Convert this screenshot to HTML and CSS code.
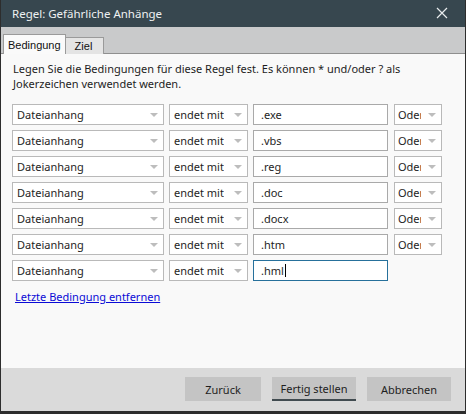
FILE: index.html
```html
<!DOCTYPE html>
<html lang="de">
<head>
  <meta charset="UTF-8" />
  <title>Regel: Gefährliche Anhänge</title>
  <link rel="stylesheet" href="styles.css">
</head>
<body>
  <div class="window">
    <div class="titlebar">
      <span class="title">Regel: Gefährliche Anhänge</span>
      <svg class="close" width="12" height="12" viewBox="0 0 12 12">
        <path d="M1 1 L11 11 M11 1 L1 11" stroke="#e8ecee" stroke-width="1.2" fill="none"/>
      </svg>
    </div>

    <div class="tabs">
      <div class="tab active">Bedingung</div>
      <div class="tab">Ziel</div>
    </div>

    <div class="content">
      <p class="intro">Legen Sie die Bedingungen für diese Regel fest. Es können * und/oder ? als Jokerzeichen verwendet werden.</p>

      <div class="rules">
        <div class="rule">
          <div class="select field"><span>Dateianhang</span><i class="arrow"></i></div>
          <div class="select op"><span>endet mit</span><i class="arrow"></i></div>
          <div class="input">.exe</div>
          <div class="select join"><span>Oder</span><i class="arrow"></i></div>
        </div>
        <div class="rule">
          <div class="select field"><span>Dateianhang</span><i class="arrow"></i></div>
          <div class="select op"><span>endet mit</span><i class="arrow"></i></div>
          <div class="input">.vbs</div>
          <div class="select join"><span>Oder</span><i class="arrow"></i></div>
        </div>
        <div class="rule">
          <div class="select field"><span>Dateianhang</span><i class="arrow"></i></div>
          <div class="select op"><span>endet mit</span><i class="arrow"></i></div>
          <div class="input">.reg</div>
          <div class="select join"><span>Oder</span><i class="arrow"></i></div>
        </div>
        <div class="rule">
          <div class="select field"><span>Dateianhang</span><i class="arrow"></i></div>
          <div class="select op"><span>endet mit</span><i class="arrow"></i></div>
          <div class="input">.doc</div>
          <div class="select join"><span>Oder</span><i class="arrow"></i></div>
        </div>
        <div class="rule">
          <div class="select field"><span>Dateianhang</span><i class="arrow"></i></div>
          <div class="select op"><span>endet mit</span><i class="arrow"></i></div>
          <div class="input">.docx</div>
          <div class="select join"><span>Oder</span><i class="arrow"></i></div>
        </div>
        <div class="rule">
          <div class="select field"><span>Dateianhang</span><i class="arrow"></i></div>
          <div class="select op"><span>endet mit</span><i class="arrow"></i></div>
          <div class="input">.htm</div>
          <div class="select join"><span>Oder</span><i class="arrow"></i></div>
        </div>
        <div class="rule">
          <div class="select field"><span>Dateianhang</span><i class="arrow"></i></div>
          <div class="select op"><span>endet mit</span><i class="arrow"></i></div>
          <div class="input focused">.hml<span class="caret"></span></div>
        </div>
      </div>

      <a class="remove" href="#">Letzte Bedingung entfernen</a>
    </div>

    <div class="footer">
      <button class="btn">Zurück</button>
      <button class="btn default">Fertig stellen</button>
      <button class="btn">Abbrechen</button>
    </div>
  </div>
</body>
</html>
```

FILE: styles.css
```css
* {
  box-sizing: border-box;
}

body {
  margin: 0;
  width: 466px;
  height: 414px;
  font-family: 'Noto Sans', sans-serif;
  font-size: 11px;
  color: #1e1e1e;
  background: #2b2b2b;
}

.window {
  width: 466px;
  height: 414px;
  display: flex;
  flex-direction: column;
  border: 1px solid #2d2d2d;
  border-top: none;
  border-bottom-width: 3px;
}

.titlebar {
  height: 27px;
  background: #37474f;
  color: #eef1f2;
  display: flex;
  align-items: center;
  justify-content: space-between;
  padding: 0 17px 1px 11px;
}

.title {
  font-size: 11.5px;
}

.tabs {
  height: 27px;
  background: #c9cacb;
  border-bottom: 1px solid #8f8f8f;
  display: flex;
  align-items: flex-end;
  padding-left: 2px;
}

.tab {
  height: 17px;
  padding: 0 11px 0 9px;
  margin-bottom: -1px;
  background: #e4e4e4;
  border: 1px solid #9a9a9a;
  border-bottom: none;
  border-left: none;
  line-height: 16px;
  font-family: 'Liberation Sans', sans-serif;
  font-size: 11px;
  color: #111;
}

.tab.active {
  height: 20px;
  background: #fafafa;
  border: 1px solid #9a9a9a;
  border-bottom: none;
  padding: 0 4px;
  line-height: 20px;
}

.content {
  flex: 1;
  background: #f9f9f9;
  padding: 7px 0 0 11px;
}

.intro {
  margin: 0 0 13px 1px;
  line-height: 15px;
  width: 420px;
}

.rules {
  display: flex;
  flex-direction: column;
  gap: 5px;
}

.rule {
  display: flex;
  gap: 5px;
  height: 21px;
}

.select {
  display: flex;
  align-items: center;
  justify-content: space-between;
  background: #fff;
  border: 1px solid #b9b9b9;
  padding: 0 5px 0 4px;
  white-space: nowrap;
  overflow: hidden;
}

.select span {
  overflow: hidden;
}

.field {
  width: 152px;
}

.op {
  width: 79px;
}

.join {
  width: 48px;
  margin-left: 1px;
  padding-left: 3px;
}

.join span {
  width: 23px;
}

.arrow {
  flex: none;
  width: 0;
  height: 0;
  border-left: 4px solid transparent;
  border-right: 4px solid transparent;
  border-top: 4px solid #bdbdbd;
}

.input {
  width: 135px;
  background: #fff;
  border: 1px solid #a9a9a9;
  padding: 0 7px;
  line-height: 19px;
  display: flex;
  align-items: center;
}

.input.focused {
  border-color: #26709b;
}

.caret {
  display: inline-block;
  width: 1px;
  height: 13px;
  background: #000;
  margin-left: 1px;
}

.remove {
  display: inline-block;
  margin: 8px 0 0 3px;
  color: #0b0bd6;
  text-decoration: underline;
}

.footer {
  height: 43px;
  background: #dadada;
  display: flex;
  justify-content: flex-end;
  align-items: center;
  gap: 11px;
  padding: 0 14px 1px 0;
}

.btn {
  height: 24px;
  width: 76px;
  border: none;
  background: #c4c4c4;
  font-family: 'Noto Sans', sans-serif;
  font-size: 11px;
  color: #1e1e1e;
  padding: 0;
}

.btn.default {
  width: 84px;
  border-bottom: 2px solid #414b50;
}

.btn:last-child {
  width: 84px;
}
```
